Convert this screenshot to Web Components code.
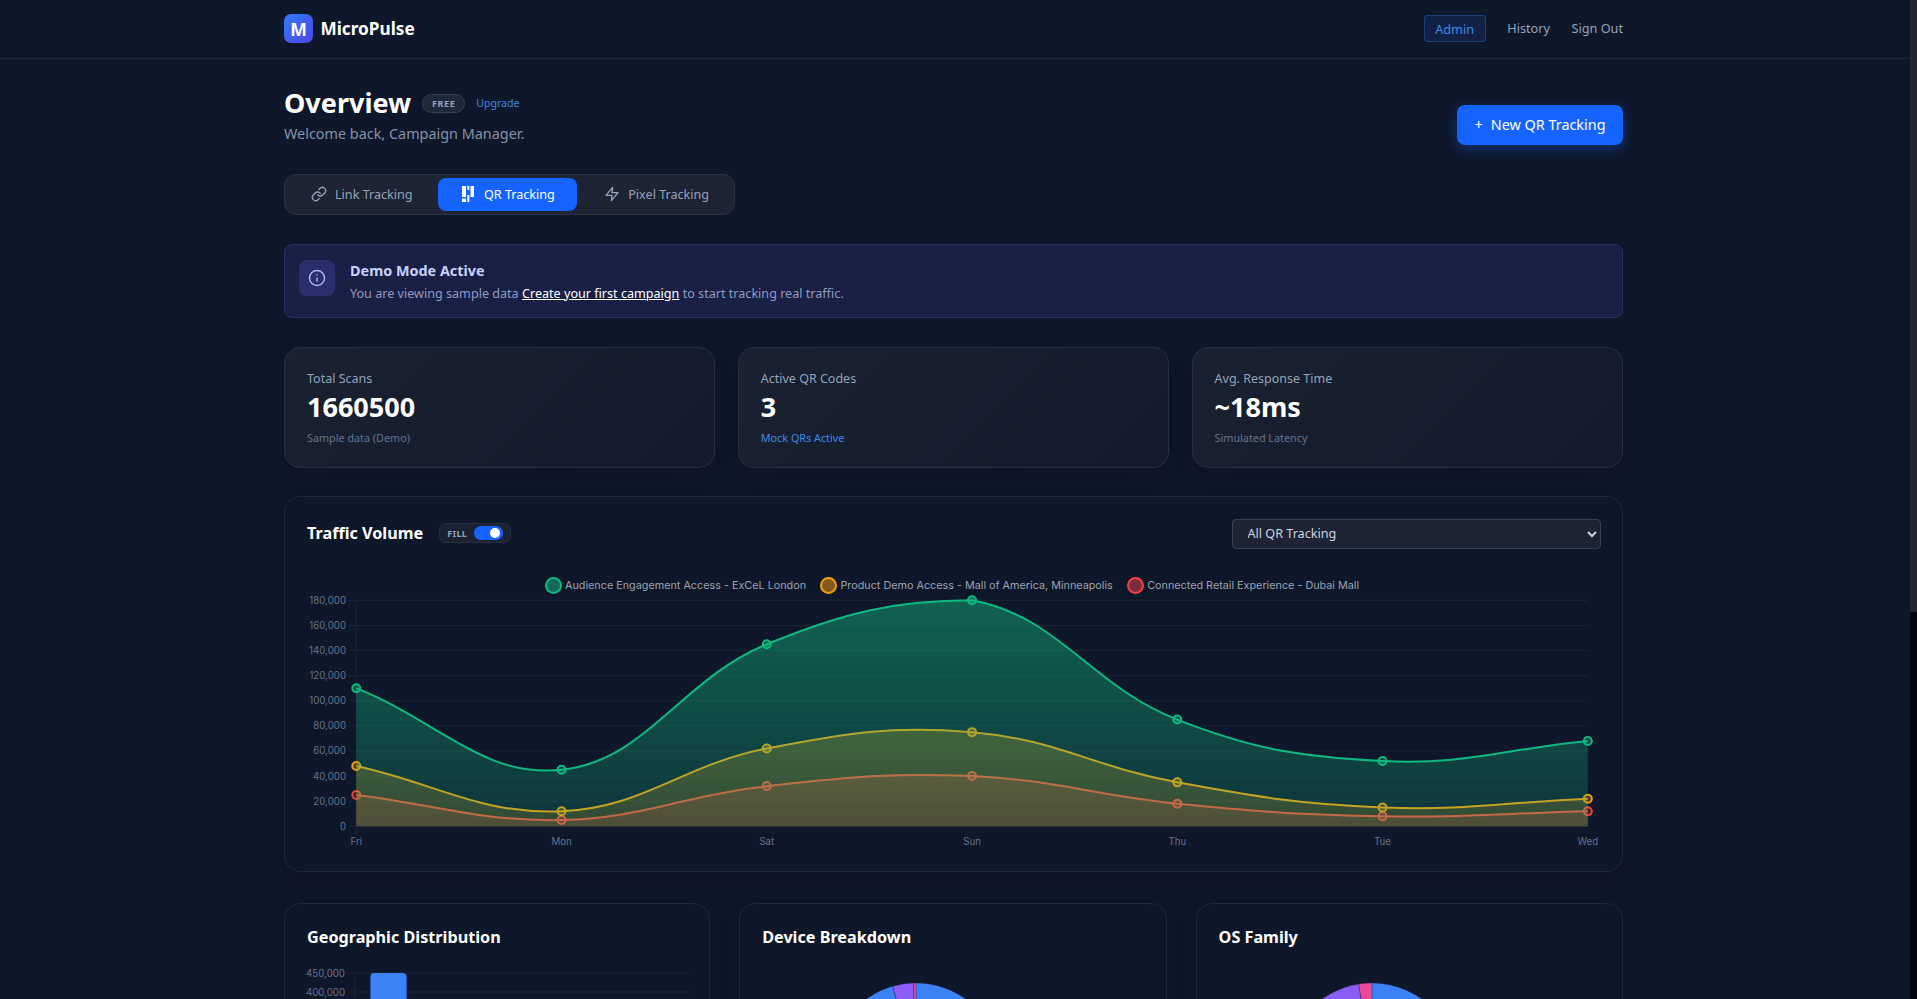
<!DOCTYPE html>
<html lang="en">
<head>
<meta charset="utf-8">
<title>MicroPulse</title>
<style>
html{background:#0f172a}
body{margin:0;background:#0f172a;color:#f8fafc;font-family:"Noto Sans",sans-serif}
mp-main{padding:0 294px 0 284px;display:block}
</style>
</head>
<body>
<mp-header></mp-header>
<mp-main>
  <mp-title-row></mp-title-row>
  <mp-tabs></mp-tabs>
  <mp-banner></mp-banner>
  <mp-stats>
    <mp-stat label="Total Scans" value="1660500" note="Sample data (Demo)"></mp-stat>
    <mp-stat label="Active QR Codes" value="3" note="Mock QRs Active" accent></mp-stat>
    <mp-stat label="Avg. Response Time" value="~18ms" note="Simulated Latency"></mp-stat>
  </mp-stats>
  <mp-traffic></mp-traffic>
  <mp-grid>
    <mp-card heading="Geographic Distribution"><mp-bars></mp-bars></mp-card>
    <mp-card heading="Device Breakdown"><mp-pie slices="#3b82f6:0:344,#8b5cf6:344:358.3,#ec4899:358.3:360"></mp-pie></mp-card>
    <mp-card heading="OS Family"><mp-pie slices="#3b82f6:0:280,#8b5cf6:280:351,#ec4899:351:360"></mp-pie></mp-card>
  </mp-grid>
</mp-main>
<mp-scrollbar></mp-scrollbar>
<script>
function el(name, html){
  customElements.define(name, class extends HTMLElement{
    constructor(){super();this.attachShadow({mode:'open'});}
    connectedCallback(){this.shadowRoot.innerHTML = typeof html==='function'?html(this):html;}
  });
}
const FONT='"Noto Sans",sans-serif';
const BLUE='#4089e8';
el('mp-scrollbar',`<style>
:host{position:fixed;top:0;right:0;bottom:0;width:7px;background:#05070f;z-index:10}
i{display:block;height:612px;background:#25272e}
</style><i></i>`);
el('mp-header',`<style>
:host{display:block;height:59px;box-sizing:border-box;border-bottom:1px solid #1e293b;padding:0 294px 1px 284px;font-family:${FONT}}
.bar{display:flex;align-items:center;justify-content:space-between;height:100%}
.brand{display:flex;align-items:center;gap:7.500px;color:#fff;font-size:17.200px;font-weight:700}
.logo{width:29px;height:29px;border-radius:7px;background:linear-gradient(135deg,#2f7bf6,#4f46e5);display:flex;align-items:center;justify-content:center;font-size:17.600px;font-weight:700}
nav{display:flex;align-items:center;gap:21.500px;font-size:12.700px;color:#94a3b8;margin-top:-1px}
.admin{color:${BLUE};background:rgba(37,99,235,.15);border:1px solid rgba(59,130,246,.3);border-radius:4px;height:27px;box-sizing:border-box;padding:0 10.700px;display:flex;align-items:center;margin-top:1px}
</style><div class="bar"><div class="brand"><span class="logo">M</span>MicroPulse</div>
<nav><span class="admin">Admin</span><span>History</span><span>Sign Out</span></nav></div>`);
el('mp-title-row',`<style>
:host{display:flex;justify-content:space-between;align-items:flex-end;padding-top:26px;margin-bottom:29px;font-family:${FONT}}
.t{display:flex;align-items:center;height:36px}
h1{margin:0 11px 0 0;font-size:27px;font-weight:700;color:#fff;line-height:36px}
.free{font-size:9px;font-weight:700;letter-spacing:.6px;color:#94a3b8;background:#1e293b;border:1px solid #334155;border-radius:10px;height:19px;box-sizing:border-box;width:43px;display:flex;align-items:center;justify-content:center;margin-right:11px}
.up{font-size:10.600px;color:${BLUE}}
p{margin:2px 0 1px;font-size:14.400px;color:#8593a8;line-height:21px}
button{font:400 14.400px ${FONT};color:#fff;background:#1664ff;border:0;border-radius:8px;height:40px;width:166px;display:flex;align-items:center;justify-content:center;gap:8px;box-shadow:0 4px 14px rgba(22,100,255,.35);padding:0 0 2px}
</style><div><div class="t"><h1>Overview</h1><span class="free">FREE</span><span class="up">Upgrade</span></div><p>Welcome back, Campaign Manager.</p></div>
<button><span>+</span><span>New QR Tracking</span></button>`);
const I='fill="none" stroke="currentColor" stroke-width="2" stroke-linecap="round" stroke-linejoin="round"';
el('mp-tabs',`<style>
:host{display:inline-flex;align-items:center;gap:2px;height:41px;padding:0 3px;box-sizing:border-box;background:#1e2433;border:1px solid #2b3342;border-radius:12px;font-family:${FONT};font-size:12.600px;color:#94a3b8;vertical-align:top}
.tab{display:flex;align-items:center;gap:8px;height:33px;padding:0 23px 1px;box-sizing:border-box;border-radius:8px}
.on{background:#1664ff;color:#fff;padding:0 22.400px 1px;margin-right:2px}
.last{padding-right:22.400px}
svg{width:16px;height:16px;flex:none}
</style>
<div class="tab"><svg viewBox="0 0 24 24" ${I}><path d="M10 13a5 5 0 0 0 7.54.54l3-3a5 5 0 0 0-7.07-7.07l-1.72 1.71"/><path d="M14 11a5 5 0 0 0-7.54-.54l-3 3a5 5 0 0 0 7.07 7.07l1.71-1.71"/></svg>Link Tracking</div>
<div class="tab on"><svg viewBox="0 0 16 16" fill="currentColor"><path d="M2 0h4v11H2zM2 12.500h4V16H2zM7.300 0h2v4h-2zM7.300 9h2v7h-2zM10.500 0H14v11h-3.500z"/></svg>QR Tracking</div>
<div class="tab last"><svg viewBox="0 0 24 24" ${I}><polygon points="13 2 3 14 12 14 11 22 21 10 12 10 13 2"/></svg>Pixel Tracking</div>`);
el('mp-banner',`<style>
:host{display:flex;align-items:flex-start;gap:15px;margin-top:29px;height:74px;box-sizing:border-box;padding:15px 14px;background:#1a1f45;border:1px solid #2a2f63;border-radius:8px;font-family:${FONT}}
.ic{width:36px;height:36px;border-radius:8px;background:#2a2f6b;color:#a5b4fc;display:flex;align-items:center;justify-content:center;flex:none}
svg{width:18px;height:18px}
b{display:block;font-size:14.400px;font-weight:700;color:#c7d2fe;line-height:21px}
span.t{display:block;font-size:12.600px;color:#8f9bc4;line-height:18px;margin-top:4px}
a{color:#fff;text-decoration:underline}
</style><div class="ic"><svg viewBox="0 0 24 24" ${I}><circle cx="12" cy="12" r="10"/><line x1="12" y1="16" x2="12" y2="12"/><line x1="12" y1="8" x2="12.01" y2="8"/></svg></div>
<div><b>Demo Mode Active</b><span class="t">You are viewing sample data <a href="#">Create your first campaign</a> to start tracking real traffic.</span></div>`);
el('mp-stats',`<style>:host{display:grid;grid-template-columns:repeat(3,1fr);gap:22.400px;margin-top:29px}</style><slot></slot>`);
el('mp-stat',h=>`<style>
:host{display:block;height:120.600px;box-sizing:border-box;padding:22px 22px 0;background:linear-gradient(135deg,#1a2232,#121a2b);border:1px solid #263041;border-radius:16px;box-shadow:0 8px 24px rgba(0,0,0,.12);font-family:${FONT}}
.l{font-size:12.500px;color:#94a3b8;line-height:18px}
.v{font-size:27px;font-weight:700;color:#fff;line-height:36px;margin-top:1px}
.n{font-size:10.800px;color:${h.hasAttribute('accent')?BLUE:'#64748b'};line-height:14px;margin-top:6px}
</style><div class="l">${h.getAttribute('label')}</div><div class="v">${h.getAttribute('value')}</div><div class="n">${h.getAttribute('note')}</div>`);
el('mp-card',h=>`<style>
:host{display:block;box-sizing:border-box;padding:22px;height:720px;background:#0f182a;border:1px solid #1e293b;border-radius:16px;box-shadow:0 8px 24px rgba(0,0,0,.14);font-family:${FONT}}
h3{margin:0;font-size:16.200px;font-weight:700;color:#fff;line-height:22px}
</style><h3>${h.getAttribute('heading')}</h3><slot></slot>`);
el('mp-grid',`<style>:host{display:grid;grid-template-columns:426.400px 427.600px 1fr;gap:28.800px;margin-top:31px;padding-bottom:7px}</style><slot></slot>`);

/* ---- traffic chart ---- */
const L={x0:356.3,dx:205.25,y0:826.3,k:25.11/20000,ox:284,oy:496};
const DAYS=['Fri','Mon','Sat','Sun','Thu','Tue','Wed'];
const DS=[
 {c:'#ef4444',d:[25000,5000,32000,40000,18000,8000,12000],id:'r'},
 {c:'#f59e0b',d:[48000,12000,62000,75000,35000,15000,22000],id:'y'},
 {c:'#10b981',d:[110000,45000,145000,180000,85000,52000,68000],id:'g'}
];
const X=x=>x-L.ox, Y=y=>y-L.oy;
function spline(pts){
  const t=.4,top=Y(600.3),bot=Y(L.y0);
  const cl=v=>Math.min(bot,Math.max(top,v));
  const cps=pts.map((p,i)=>{
    const a=pts[i-1]||p,b=pts[i+1]||p;
    const d1=Math.hypot(p[0]-a[0],p[1]-a[1]),d2=Math.hypot(b[0]-p[0],b[1]-p[1]);
    const s=d1+d2||1,fa=t*d1/s,fb=t*d2/s;
    return {p:[p[0]-fa*(b[0]-a[0]),cl(p[1]-fa*(b[1]-a[1]))],n:[p[0]+fb*(b[0]-a[0]),cl(p[1]+fb*(b[1]-a[1]))]};
  });
  let s=`M${pts[0][0]} ${pts[0][1]}`;
  for(let i=1;i<pts.length;i++){s+=`C${cps[i-1].n[0]} ${cps[i-1].n[1]} ${cps[i].p[0]} ${cps[i].p[1]} ${pts[i][0]} ${pts[i][1]}`;}
  return s;
}
function trafficSvg(){
  const W=1339,H=376;
  let g='',defs='';
  for(let v=0;v<=180000;v+=20000){
    const y=L.y0-v*L.k;
    g+=`<line x1="${X(349)}" x2="${X(1588)}" y1="${Y(y)}" y2="${Y(y)}" stroke="#1c2536"/>`;
    g+=`<text x="${X(346)}" y="${Y(y)+3.500}" text-anchor="end" class="ax">${v.toLocaleString('en-US')}</text>`;
  }
  g+=`<line x1="${X(L.x0)}" x2="${X(L.x0)}" y1="${Y(600.3)}" y2="${Y(834)}" stroke="#1c2536"/>`;
  DAYS.forEach((d,i)=>{g+=`<text x="${X(L.x0+i*L.dx)}" y="${Y(844.6)}" text-anchor="middle" class="ax">${d}</text>`;});
  DS.forEach(s=>{
    defs+=`<linearGradient id="${s.id}" gradientUnits="userSpaceOnUse" x1="0" x2="0" y1="${Y(572)}" y2="${Y(972)}"><stop offset="0" stop-color="${s.c}" stop-opacity=".5"/><stop offset="1" stop-color="${s.c}" stop-opacity="0"/></linearGradient>`;
    const pts=s.d.map((v,i)=>[X(L.x0+i*L.dx),Y(L.y0-v*L.k)]);
    const p=spline(pts);
    g+=`<path d="${p}L${pts[6][0]} ${Y(L.y0)}L${pts[0][0]} ${Y(L.y0)}Z" fill="url(#${s.id})"/>`;
    g+=`<path d="${p}" fill="none" stroke="${s.c}" stroke-width="2"/>`;
    pts.forEach(q=>{g+=`<circle cx="${q[0]}" cy="${q[1]}" r="4" fill="url(#${s.id})" stroke="${s.c}" stroke-width="2"/>`;});
  });
  return `<svg width="${W}" height="${H}" viewBox="0 0 ${W} ${H}"><defs>${defs}</defs>${g}</svg>`;
}
el('mp-traffic',`<style>
:host{display:block;position:relative;height:376px;margin-top:28.400px;box-sizing:border-box;background:#0f172a;border:1px solid #1e293b;border-radius:16px;box-shadow:0 8px 24px rgba(0,0,0,.14);font-family:${FONT}}
svg{position:absolute;left:-1px;top:-1px}
.ax{font:9.7px Inter,sans-serif;fill:#64748b}
.head{position:relative;z-index:1;display:flex;align-items:center;justify-content:space-between;padding:22px 22px 0;height:30px}
.lt{display:flex;align-items:center;gap:16px;margin-top:-1px}
h3{margin:0;font-size:16.200px;font-weight:700;color:#fff}
.pill{display:flex;align-items:center;gap:7px;height:20px;box-sizing:border-box;padding:0 7px;background:#1a2233;border:1px solid #273043;border-radius:7px;font-size:9px;font-weight:700;letter-spacing:.4px;color:#94a3b8}
.tg{width:29px;height:14px;border-radius:7px;background:#1664ff;position:relative}
.tg i{position:absolute;right:3px;top:2px;width:10px;height:10px;border-radius:50%;background:#fff}
select{width:369.500px;height:30px;box-sizing:border-box;background:#1e2433;color:#cbd5e1;border:1px solid #334155;border-radius:4px;font:12.600px ${FONT};padding:0 11px 1px;margin-right:-1px}
.legend{position:absolute;left:0;right:0;top:76.500px;display:flex;font:10.8px Inter,sans-serif;color:#9ca3af;padding-left:260px;height:24px;align-items:center;z-index:1}
.li{display:flex;align-items:center;gap:3px;margin-right:14.400px;white-space:nowrap}
.li i{width:13px;height:13px;border:2px solid;border-radius:50%}
</style>
<div class="head"><div class="lt"><h3>Traffic Volume</h3><div class="pill">FILL<span class="tg"><i></i></span></div></div>
<select><option>All QR Tracking</option></select></div>
<div class="legend">
<span class="li"><i style="border-color:#10b981;background:#146a5a"></i>Audience Engagement Access - ExCeL London</span>
<span class="li"><i style="border-color:#f59e0b;background:#835c1b"></i>Product Demo Access - Mall of America, Minneapolis</span>
<span class="li"><i style="border-color:#ef4444;background:#7e2e3a"></i>Connected Retail Experience - Dubai Mall</span>
</div>${trafficSvg()}`);

/* ---- bars ---- */
el('mp-bars',()=>{
  let g='';
  for(let i=0;i<=9;i++){
    const v=450000-i*50000,y=5+i*19;
    g+=`<line x1="41" x2="381.700" y1="${y}" y2="${y}" stroke="#1c2536"/>`;
    if(i<2)g+=`<text x="38" y="${y+3.500}" text-anchor="end" class="ax">${v.toLocaleString('en-US')}</text>`;
  }
  g+=`<line x1="48" x2="48" y1="5" y2="176" stroke="#1c2536"/>`;
  g+=`<path d="M63.400 176V9a4 4 0 0 1 4-4h28.200a4 4 0 0 1 4 4V176Z" fill="#3b82f6"/>`;
  return `<style>:host{display:block;margin-top:20px}svg{display:block;overflow:visible}.ax{font:9.7px Inter,sans-serif;fill:#64748b}</style><svg width="382" height="190" viewBox="0 0 382 190">${g}</svg>`;
});
/* ---- pies ---- */
el('mp-pie',h=>{
  const R=85,C=86;
  const pt=a=>{const r=(a-90)*Math.PI/180;return [C+R*Math.cos(r),C+R*Math.sin(r)];};
  const s=h.getAttribute('slices').split(',').map(x=>{
    const [c,a,b]=x.split(':');const p=pt(+a),q=pt(+b);
    return `<path d="M${C} ${C}L${p[0]} ${p[1]}A${R} ${R} 0 ${(+b-+a)>180?1:0} 1 ${q[0]} ${q[1]}Z" fill="${c}" stroke="rgba(15,23,42,.5)" stroke-width=".5"/>`;
  }).join('');
  return `<style>:host{display:block;margin-top:34.300px;padding-left:67.700px}svg{display:block}</style><svg width="172" height="172" viewBox="0 0 172 172">${s}</svg>`;
});
el('mp-main',`<slot></slot>`);
</script>
</body>
</html>
